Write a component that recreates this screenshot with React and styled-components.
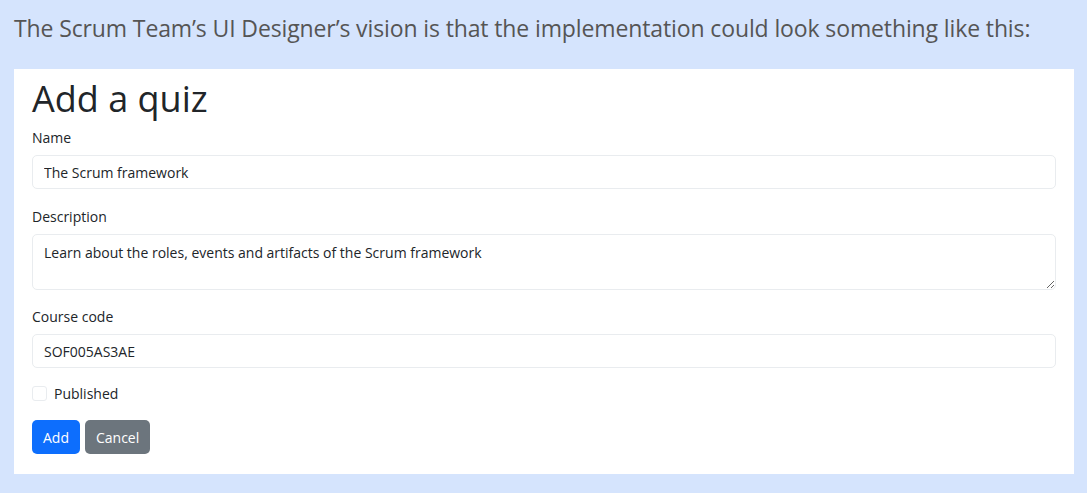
import styled, { createGlobalStyle } from "styled-components";

const GlobalStyle = createGlobalStyle`
  html, body {
    margin: 0;
    padding: 0;
    background: #d5e4fd;
  }
  * {
    box-sizing: border-box;
  }
`;

function App() {
  return (
    <>
      <GlobalStyle />
      <Page>
        <Intro>
          The Scrum Team’s UI Designer’s vision is that the implementation could look something like this:
        </Intro>
        <Panel>
          <Heading>Add a quiz</Heading>
          <Field>
            <Label>Name</Label>
            <Input defaultValue="The Scrum framework" />
          </Field>
          <Field>
            <Label>Description</Label>
            <TextArea defaultValue="Learn about the roles, events and artifacts of the Scrum framework" />
          </Field>
          <Field>
            <Label>Course code</Label>
            <Input defaultValue="SOF005AS3AE" />
          </Field>
          <CheckRow>
            <Check type="checkbox" id="published" />
            <CheckLabel htmlFor="published">Published</CheckLabel>
          </CheckRow>
          <Buttons>
            <Button $variant="primary">Add</Button>
            <Button $variant="secondary">Cancel</Button>
          </Buttons>
        </Panel>
      </Page>
    </>
  );
}

export default App;

const Page = styled.div`
  padding: 12px 13px 20px 14px;
  font-family: "Open Sans", "Noto Sans", sans-serif;
`;

const Intro = styled.p`
  margin: 0 0 25px;
  font-size: 23px;
  line-height: 32px;
  color: #555;
  letter-spacing: -0.12px;
`;

const Panel = styled.div`
  background: #fff;
  padding: 8px 18px 20px;
  display: flex;
  flex-direction: column;
`;

const Heading = styled.h1`
  margin: 0 0 7px;
  font-size: 36px;
  font-weight: 400;
  line-height: 43px;
  color: #212529;
`;

const Field = styled.div`
  display: flex;
  flex-direction: column;
  margin-bottom: 16.5px;
`;

const Label = styled.label`
  font-size: 14px;
  line-height: 21px;
  color: #212529;
  margin-bottom: 7px;
`;

const Input = styled.input`
  height: 34px;
  padding: 0 11px;
  border: 1px solid #e9ecef;
  border-radius: 5px;
  font: inherit;
  font-size: 14px;
  color: #212529;
  outline: none;
`;

const TextArea = styled.textarea`
  height: 56px;
  padding: 7px 11px;
  border: 1px solid #e9ecef;
  border-radius: 5px;
  font: inherit;
  font-size: 14px;
  line-height: 21px;
  color: #212529;
  outline: none;
  resize: vertical;
`;

const CheckRow = styled.div`
  display: flex;
  align-items: center;
  gap: 7px;
  margin: -1.5px 0 16px;
`;

const Check = styled.input`
  appearance: none;
  width: 15px;
  height: 15px;
  margin: 0;
  border: 1px solid #e9ecef;
  border-radius: 3px;
  background: #fff;
`;

const CheckLabel = styled.label`
  font-size: 14px;
  line-height: 21px;
  color: #212529;
`;

const Buttons = styled.div`
  display: flex;
  gap: 5px;
`;

const Button = styled.button`
  height: 34px;
  padding: 0 11px;
  border: none;
  border-radius: 5px;
  font: inherit;
  font-size: 14px;
  color: #fff;
  background: ${(p) => (p.$variant === "primary" ? "#0d6efd" : "#6c757d")};
`;
